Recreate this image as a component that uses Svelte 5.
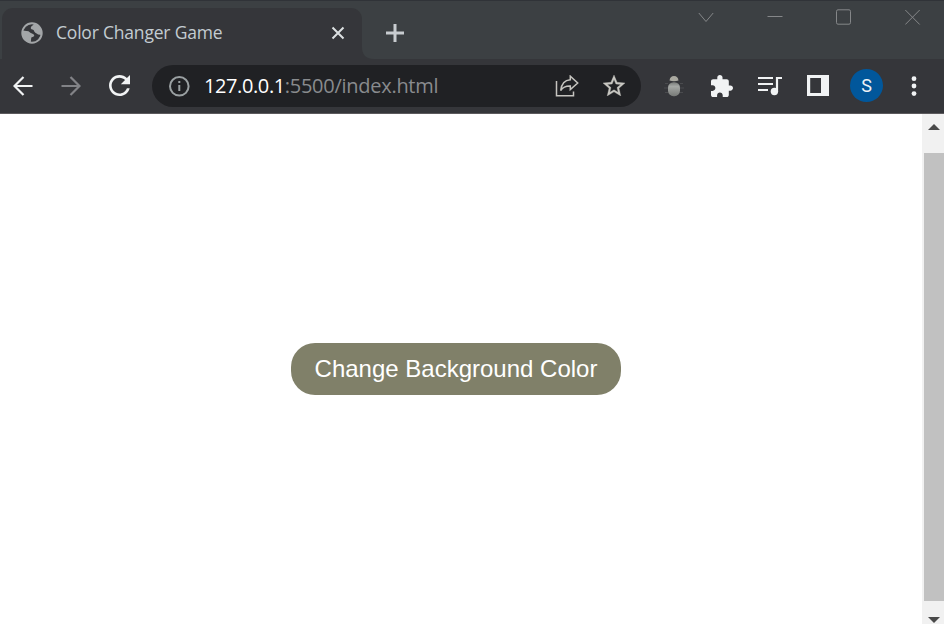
<script>
  let url = { host: '127.0.0.1', rest: ':5500/index.html' };
</script>

<div class="browser">
  <header class="tabs">
    <div class="tab">
      <svg class="globe" width="22" height="22" viewBox="0 0 22 22">
        <circle cx="11" cy="11" r="9.7" fill="none" stroke="#a3a6a8" stroke-width="2" />
        <path fill="#a3a6a8" d="M1.5 8.5L7.5 9.2Q9.5 11 11 11.5Q13.500 12 13.300 14Q12.500 15 10.300 15.400Q10 17.500 9.800 21Q2 20 1.200 11zM13 1.600C12.800 3.600 10.400 3.700 9.800 5.500C9.400 7.400 11.200 7.200 12.600 8.100C13.200 10.800 15.100 11 17.100 12.400L20.800 13Q22 5.500 13 1.600z" />
      </svg>
      <span class="title">Color Changer Game</span>
      <svg class="close" width="14" height="14" viewBox="0 0 14 14"><path d="M1.500 1.500L12.500 12.500M12.500 1.500L1.500 12.500" stroke="#dce0e2" stroke-width="2" /></svg>
    </div>
    <svg class="curve" width="12" height="12" viewBox="0 0 12 12"><path fill="#35363a" d="M0 0Q0 12 12 12H0z" /></svg>
    <svg class="plus" width="18" height="18" viewBox="0 0 18 18"><path d="M9 0V18M0 9H18" stroke="#c8ccd0" stroke-width="3" /></svg>
    <div class="window-controls">
      <svg width="16" height="16" viewBox="0 0 16 16"><path d="M.8 4L8 12.500L15.200 4" /></svg>
      <svg width="16" height="16" viewBox="0 0 16 16"><path d="M.5 7.500H15.500" /></svg>
      <svg width="16" height="16" viewBox="0 0 16 16"><rect x=".5" y=".8" width="14" height="14.400" rx="1.500" /></svg>
      <svg width="16" height="16" viewBox="0 0 16 16"><path d="M.3 1L14.700 15.500M14.700 1L.3 15.500" /></svg>
    </div>
  </header>

  <nav class="toolbar">
    <svg class="back" width="20" height="20" viewBox="0 0 20 20"><path d="M19.500 10H2M10.500 1L1.500 10L10.500 19" fill="none" stroke="#f1f3f4" stroke-width="2.200" /></svg>
    <svg class="forward" width="20" height="20" viewBox="0 0 20 20"><path d="M.5 10H18M9.500 1L18.500 10L9.500 19" fill="none" stroke="#828387" stroke-width="2.200" /></svg>
    <svg class="reload" width="21" height="21" viewBox="4 4 16 16"><path fill="#f1f3f4" d="M17.650 6.350C16.200 4.900 14.210 4 12 4c-4.420 0-7.990 3.580-7.990 8s3.570 8 7.990 8c3.730 0 6.840-2.550 7.730-6h-2.080c-.82 2.330-3.040 4-5.650 4-3.310 0-6-2.690-6-6s2.690-6 6-6c1.660 0 3.140.69 4.220 1.780L13 11h7V4l-2.350 2.350z" /></svg>
    <div class="address">
      <svg class="info" width="22" height="22" viewBox="0 0 22 22"><circle cx="11.300" cy="11.300" r="9.300" fill="none" stroke="#9aa0a2" stroke-width="2" /><path d="M11.300 10V16M11.300 6V8" stroke="#9aa0a2" stroke-width="2" /></svg>
      <span class="url"><b>{url.host}</b>{url.rest}</span>
      <svg class="share" width="24" height="22" viewBox="0 0 24 22"><path fill="none" stroke="#c5c4bf" stroke-width="1.500" d="M1.500 6V20.800H18.500V16.500M5.700 15.500C6.500 8.500 9.500 5 15.300 4.700V1.200L22.700 8L15.300 14.500V11C10.500 10.800 8 12 5.700 15.500z" /></svg>
      <svg class="star" width="22" height="21" viewBox="2 2 20 19"><path fill="#c8c7c2" stroke="#c8c7c2" stroke-width=".3" d="M22 9.240l-7.190-.62L12 2 9.190 8.630 2 9.240l5.460 4.730L5.820 21 12 17.270 18.180 21l-1.630-7.030L22 9.240zM12 15.400l-3.760 2.270 1-4.280-3.320-2.880 4.380-.38L12 6.100l1.710 4.040 4.380.38-3.320 2.880 1 4.280L12 15.400z" /></svg>
    </div>
    <svg class="bug" width="20" height="22" viewBox="0 0 20 22">
      <defs><linearGradient id="shell" x1="0" y1="0" x2="0" y2="1"><stop offset="0" stop-color="#777a78" /><stop offset=".3" stop-color="#a5a8a5" /><stop offset="1" stop-color="#777a77" /></linearGradient></defs>
      <path d="M1 8.500H4M16 8.500H19M0 13H4M16 13H20M1 17.500H4M16 17.500H19" stroke="#4a4b4e" stroke-width="1" />
      <path d="M5.500 5.500Q6 1 10 1T14.500 5.500Q10 7 5.500 5.500z" fill="#aaa9a0" />
      <rect x="4" y="7.200" width="12" height="14" rx="5.500" fill="url(#shell)" />
    </svg>
    <svg class="puzzle" width="22" height="22" viewBox="2 1 21 21"><path fill="#f1f3f4" d="M20.500 11H19V7c0-1.100-.9-2-2-2h-4V3.500C13 2.120 11.880 1 10.500 1S8 2.120 8 3.500V5H4c-1.100 0-1.990.9-1.990 2v3.800H3.500c1.490 0 2.700 1.210 2.700 2.700s-1.210 2.700-2.700 2.700H2V20c0 1.100.9 2 2 2h3.800v-1.500c0-1.490 1.210-2.700 2.700-2.700 1.490 0 2.700 1.210 2.700 2.700V22H17c1.100 0 2-.9 2-2v-4h1.500c1.380 0 2.500-1.120 2.500-2.500S21.880 11 20.500 11z" /></svg>
    <svg class="queue" width="24" height="20" viewBox="0 0 24 20"><path d="M0 2H15M0 8H15M0 14H10" stroke="#f1f3f4" stroke-width="2.200" /><path d="M19 16V2H24" fill="none" stroke="#f1f3f4" stroke-width="2.200" /><circle cx="16.400" cy="15.500" r="3.700" fill="#f1f3f4" /></svg>
    <svg class="panel" width="22" height="21" viewBox="0 0 22 21"><path fill="#f1f3f4" fill-rule="evenodd" d="M0 0H22V21H0zM3.200 3V18H14V3z" /></svg>
    <div class="avatar">S</div>
    <svg class="menu" width="6" height="20" viewBox="0 0 6 20"><circle cx="3" cy="2.700" r="2.400" /><circle cx="3" cy="10" r="2.400" /><circle cx="3" cy="17.600" r="2.400" /></svg>
  </nav>

  <div class="viewport">
    <main><button>Change Background Color</button></main>
    <aside class="scrollbar">
      <svg width="12" height="6" viewBox="0 0 12 6"><path fill="#494949" d="M0 6L6 0L12 6z" /></svg>
      <div class="thumb"></div>
      <svg class="down" width="12" height="6" viewBox="0 0 12 6"><path fill="#494949" d="M0 0L6 6L12 0z" /></svg>
    </aside>
  </div>
</div>

<style>
  .browser { width: 944px; height: 624px; display: flex; flex-direction: column; overflow: hidden; background: #fff; }
  .browser, .browser * { box-sizing: border-box; }
  svg { display: block; flex: none; }
  .tabs { height: 59px; flex: none; display: flex; align-items: flex-start; background: #3c4043; border-top: 1px solid #303338; padding-left: 2px; }
  .tab { margin-top: 7px; width: 360px; height: 51px; background: #35363a; border-radius: 11px 11px 0 0; display: flex; align-items: flex-start; padding-left: 19px; }
  .globe { margin-top: 14px; }
  .title { width: 275px; margin-left: 13px; padding-top: 11px; line-height: 26px; font-family: "Open Sans", "Noto Sans", sans-serif; font-size: 17.500px; letter-spacing: -.2px; color: #c3ccd1; white-space: nowrap; }
  .close { margin: 18px 0 0; }
  .curve { align-self: flex-end; }
  .plus { margin: 23px 0 0 12px; }
  .window-controls { display: flex; gap: 53px; margin: 8px 0 0 294px; }
  .window-controls svg { fill: none; stroke: #858789; stroke-width: 1; }
  .toolbar { height: 55px; flex: none; display: flex; align-items: center; background: #35363a; border-bottom: 1px solid #5c5a5d; padding-left: 13px; }
  .back, .forward, .reload, .star, .puzzle, .queue, .panel, .avatar, .menu { margin-bottom: 1px; }
  .forward { margin-left: 28px; }
  .reload { margin-left: 28px; }
  .address { width: 489px; height: 42px; margin-left: 22px; border-radius: 21px; background: #202124; display: flex; align-items: center; padding-left: 16px; }
  .url { width: 351px; margin-left: 14px; font: 20px/28px "Open Sans", "Noto Sans", sans-serif; letter-spacing: -.27px; color: #898b8e; white-space: nowrap; }
  .url b { font-weight: 400; letter-spacing: -.4px; color: #fff; }
  .star { margin-left: 24px; }
  .bug { margin-left: 23px; }
  .puzzle { margin-left: 27px; }
  .queue { margin-left: 25px; }
  .panel { margin-left: 25px; }
  .avatar { width: 33px; height: 33px; margin-left: 21px; border-radius: 50%; background: #01579b; color: #eef2f5; font: 18px/33px Roboto, sans-serif; text-align: center; }
  .menu { margin-left: 28px; fill: #f1f3f4; }
  .viewport { flex: 1; min-height: 0; display: flex; }
  main { width: 922px; display: flex; justify-content: center; align-items: center; padding-right: 10px; }
  button { width: 330px; height: 52px; padding: 0; border: 0; border-radius: 24px; background: #808069; color: #fff; font: 24px "Liberation Sans", Arial, sans-serif; white-space: nowrap; }
  .scrollbar { width: 22px; background: #f1f1f1; display: flex; flex-direction: column; align-items: center; padding: 10px 0 0 2px; }
  .thumb { width: 20px; height: 448px; margin-top: 23px; background: #c1c1c1; flex: none; }
  .down { margin-top: 16px; }
</style>
